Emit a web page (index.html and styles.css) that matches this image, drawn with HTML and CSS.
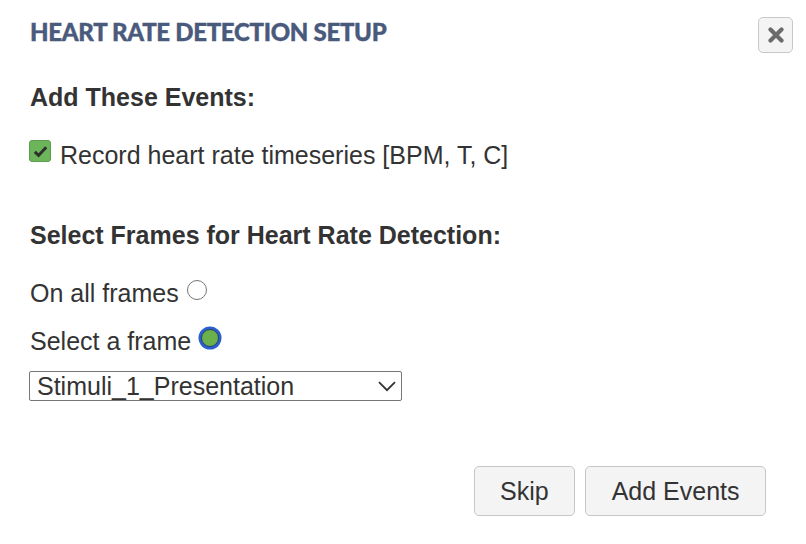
FILE: index.html
```html
<!DOCTYPE html>
<html lang="en">
<head>
<meta charset="utf-8">
<title>Heart Rate Detection Setup</title>
<link rel="stylesheet" href="styles.css">
</head>
<body>
<div class="dialog">
  <header class="dialog-header">
    <h1 class="dialog-title">HEART RATE DETECTION SETUP</h1>
    <button class="close-btn" type="button" aria-label="Close">
      <svg width="16" height="16" viewBox="0 0 16 16" aria-hidden="true">
        <path d="M2.5 2.5 L13.5 13.5 M13.5 2.5 L2.5 13.5" stroke="#6b6b6b" stroke-width="4.2" stroke-linecap="round"/>
      </svg>
    </button>
  </header>
  <main class="dialog-body">
    <h2 class="section-title first">Add These Events:</h2>
    <label class="check-row">
      <span class="checkbox">
        <svg width="15" height="13" viewBox="0 0 15 13" aria-hidden="true">
          <path d="M1.8 6.8 L5.6 10.4 L13.2 2.2" fill="none" stroke="#2f2f2f" stroke-width="3"/>
        </svg>
      </span>
      <span class="label-text">Record heart rate timeseries [BPM, T, C]</span>
    </label>

    <h2 class="section-title second">Select Frames for Heart Rate Detection:</h2>
    <label class="radio-row first-radio">
      <span class="label-text">On all frames</span>
      <input class="radio" type="radio" name="frames">
    </label>
    <label class="radio-row second-radio">
      <span class="label-text">Select a frame</span>
      <input class="radio" type="radio" name="frames" checked>
    </label>
    <div class="select-wrap">
      <select class="frame-select">
        <option>Stimuli_1_Presentation</option>
      </select>
      <svg class="chevron" width="18" height="11" viewBox="0 0 18 11" aria-hidden="true">
        <path d="M1 1.2 L9 9.2 L17 1.2" fill="none" stroke="#333" stroke-width="1.8"/>
      </svg>
    </div>
  </main>
  <footer class="dialog-footer">
    <button class="btn" type="button">Skip</button>
    <button class="btn" type="button">Add Events</button>
  </footer>
</div>
</body>
</html>
```

FILE: styles.css
```css
html, body {
  margin: 0;
  padding: 0;
  background: #ffffff;
}

body {
  font-family: "Liberation Sans", Arial, sans-serif;
  font-size: 25px;
  color: #333333;
}

.dialog {
  width: 806px;
  height: 544px;
  box-sizing: border-box;
}

.dialog-header {
  display: flex;
  justify-content: space-between;
  align-items: flex-start;
  padding: 17px 13px 0 30px;
}

.dialog-title {
  margin: 0;
  font-family: Lato, "Open Sans", sans-serif;
  font-weight: 900;
  font-size: 24px;
  line-height: 30px;
  color: #4a5a7c;
  letter-spacing: -0.3px;
  -webkit-text-stroke: 0.4px #4a5a7c;
}

.close-btn {
  width: 35px;
  height: 36px;
  padding: 0;
  margin: 0;
  border: 1px solid #c8c8c8;
  border-radius: 5px;
  background: #f4f4f4;
  display: flex;
  align-items: center;
  justify-content: center;
}

.dialog-body {
  padding: 0 40px 0 30px;
  display: flex;
  flex-direction: column;
  align-items: flex-start;
}

.section-title {
  margin: 0;
  font-size: 25px;
  font-weight: bold;
  line-height: 30px;
  color: #333333;
}

.section-title.first {
  margin-top: 29px;
}

.section-title.second {
  margin-top: 50px;
}

.check-row {
  margin-top: 28px;
  display: flex;
  align-items: flex-start;
  line-height: 30px;
}

.checkbox {
  width: 22px;
  height: 22px;
  box-sizing: border-box;
  margin-left: -1px;
  margin-right: 9px;
  border: 1px solid #5d9c4c;
  border-radius: 3px;
  background: #6cb55a;
  display: flex;
  align-items: center;
  justify-content: center;
}

.label-text {
  line-height: 30px;
}

.radio-row {
  display: flex;
  align-items: flex-start;
  line-height: 30px;
}

.first-radio {
  margin-top: 28px;
}

.second-radio {
  margin-top: 18px;
}

.radio {
  appearance: none;
  -webkit-appearance: none;
  margin: 2px 0 0 8px;
  width: 20px;
  height: 20px;
  box-sizing: border-box;
  border: 1.5px solid #767676;
  border-radius: 50%;
  background: #ffffff;
}

.radio:checked {
  width: 18px;
  height: 18px;
  margin: 3px 0 0 10px;
  border: 1px solid #2c3f66;
  background: #6ab04c;
  box-shadow: 0 0 0 2.5px #2a5fd2;
}

.select-wrap {
  position: relative;
  margin-top: 15px;
  margin-left: -1px;
}

.frame-select {
  appearance: none;
  -webkit-appearance: none;
  width: 373px;
  height: 30px;
  box-sizing: border-box;
  margin: 0;
  padding: 0 30px 0 7px;
  border: 1px solid #777777;
  border-radius: 2px;
  background: #ffffff;
  font-family: "Liberation Sans", Arial, sans-serif;
  font-size: 25px;
  line-height: 28px;
  color: #333333;
}

.chevron {
  position: absolute;
  right: 6px;
  top: 10px;
  pointer-events: none;
}

.dialog-footer {
  display: flex;
  justify-content: flex-end;
  gap: 10px;
  padding: 65px 40px 0 30px;
}

.btn {
  height: 50px;
  padding: 0 25.5px;
  margin: 0;
  border: 1px solid #c6c6c6;
  border-radius: 5px;
  background: #f4f4f4;
  font-family: "Liberation Sans", Arial, sans-serif;
  font-size: 25px;
  color: #333333;
}
```
